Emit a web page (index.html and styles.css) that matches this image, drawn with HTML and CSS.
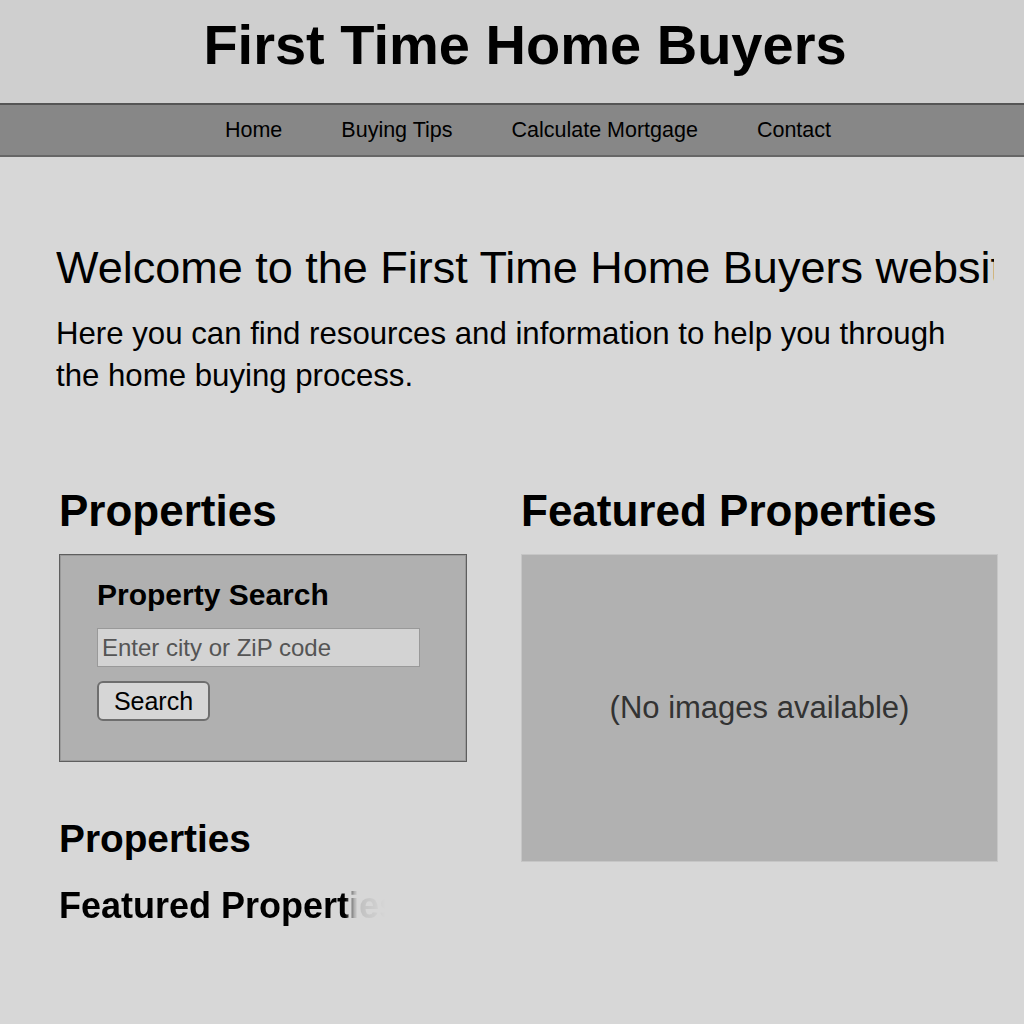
FILE: index.html
```html
<!DOCTYPE html>
<html lang="en">
<head>
<meta charset="utf-8">
<title>First Time Home Buyers</title>
<link rel="stylesheet" href="styles.css">
</head>
<body>
<header class="site-header">
  <h1 class="site-title">First Time Home Buyers</h1>
</header>
<nav class="main-nav">
  <ul class="nav-list">
    <li><a href="#" class="nav-link">Home</a></li>
    <li><a href="#" class="nav-link">Buying Tips</a></li>
    <li><a href="#" class="nav-link">Calculate Mortgage</a></li>
    <li><a href="#" class="nav-link">Contact</a></li>
  </ul>
</nav>
<main class="content">
  <h2 class="welcome">Welcome to the First Time Home Buyers website!</h2>
  <p class="intro">Here you can find resources and information to help you through the home buying process.</p>
  <div class="columns">
    <section class="col col-left">
      <h2 class="section-title">Properties</h2>
      <div class="search-box">
        <h3 class="search-title">Property Search</h3>
        <input class="search-input" type="text" placeholder="Enter city or ZiP code">
        <button class="search-btn" type="button">Search</button>
      </div>
      <h3 class="sub-title">Properties</h3>
      <h4 class="sub-title-small">Featured Properties</h4>
    </section>
    <section class="col col-right">
      <h2 class="section-title">Featured Properties</h2>
      <div class="featured-box">
        <span class="no-images">(No images available)</span>
      </div>
    </section>
  </div>
</main>
</body>
</html>
```
FILE: styles.css
```css
html, body {
  margin: 0;
  padding: 0;
}
body {
  background: #d7d7d7;
  font-family: "Liberation Sans", Arial, sans-serif;
  color: #000;
  width: 1024px;
  height: 1024px;
  overflow: hidden;
}
.site-header {
  background: #cfcfcf;
  height: 103px;
  box-sizing: border-box;
  padding: 17px 0 0 26px;
  text-align: center;
}
.site-title {
  margin: 0;
  font-size: 56px;
  line-height: 56px;
  font-weight: bold;
}
.main-nav {
  background: #878787;
  border-top: 2px solid #555;
  border-bottom: 2px solid #666;
  height: 50px;
}
.nav-list {
  list-style: none;
  margin: 0;
  padding: 0 0 0 32px;
  height: 100%;
  display: flex;
  justify-content: center;
  align-items: center;
  gap: 59px;
}
.nav-link {
  color: #000;
  text-decoration: none;
  font-size: 21.5px;
  line-height: 24px;
}
.content {
  padding: 0 26px 0 56px;
}
.welcome {
  margin: 85px 0 0 0;
  width: 938px;
  font-size: 45px;
  line-height: 52px;
  font-weight: normal;
  white-space: nowrap;
  overflow: hidden;
}
.intro {
  margin: 19px 0 0 0;
  font-size: 31.2px;
  line-height: 42px;
  width: 910px;
}
.columns {
  display: grid;
  grid-template-columns: 411px 480px;
  column-gap: 51px;
  margin-top: 88px;
}
.section-title {
  margin: 0 0 0 3px;
  font-size: 44px;
  line-height: 52px;
  font-weight: bold;
  white-space: nowrap;
}
.search-box {
  margin: 17px 0 0 3px;
  background: #b0b0b0;
  border: 1px solid #5e5e5e;
  box-shadow: inset 0 0 0 1px #9a9a9a;
  height: 208px;
  box-sizing: border-box;
  padding: 23px 0 0 35px;
}
.search-title {
  margin: 0 0 0 2px;
  font-size: 30px;
  line-height: 34px;
  font-weight: bold;
}
.search-input {
  display: block;
  margin: 16px 0 0 2px;
  width: 323px;
  height: 39px;
  box-sizing: border-box;
  background: #d3d3d3;
  border: 1px solid #999;
  padding: 0 0 0 4px;
  font-family: "Liberation Sans", Arial, sans-serif;
  font-size: 24px;
  color: #333;
}
.search-input::placeholder {
  color: #555;
}
.search-btn {
  display: block;
  margin: 14px 0 0 2px;
  width: 113px;
  height: 40px;
  box-sizing: border-box;
  background: #d6d6d6;
  border: 2px solid #6e6e6e;
  border-radius: 6px;
  font-family: "Liberation Sans", Arial, sans-serif;
  font-size: 25px;
  color: #000;
  padding: 0;
}
.sub-title {
  margin: 55px 0 0 3px;
  font-size: 38.8px;
  line-height: 44px;
  font-weight: bold;
}
.sub-title-small {
  margin: 25px 0 0 3px;
  font-size: 36px;
  line-height: 40px;
  font-weight: bold;
  width: 328px;
  white-space: nowrap;
  overflow: hidden;
  -webkit-mask-image: linear-gradient(to right, #000 286px, rgba(0,0,0,0.12) 296px, transparent 326px);
  mask-image: linear-gradient(to right, #000 286px, rgba(0,0,0,0.12) 296px, transparent 326px);
}
.featured-box {
  margin: 17px 0 0 3px;
  height: 308px;
  box-sizing: border-box;
  background: #b1b1b1;
  border: 1px solid #c6c6c6;
  display: flex;
  align-items: center;
  justify-content: center;
}
.no-images {
  font-size: 31px;
  color: #333;
}
```
